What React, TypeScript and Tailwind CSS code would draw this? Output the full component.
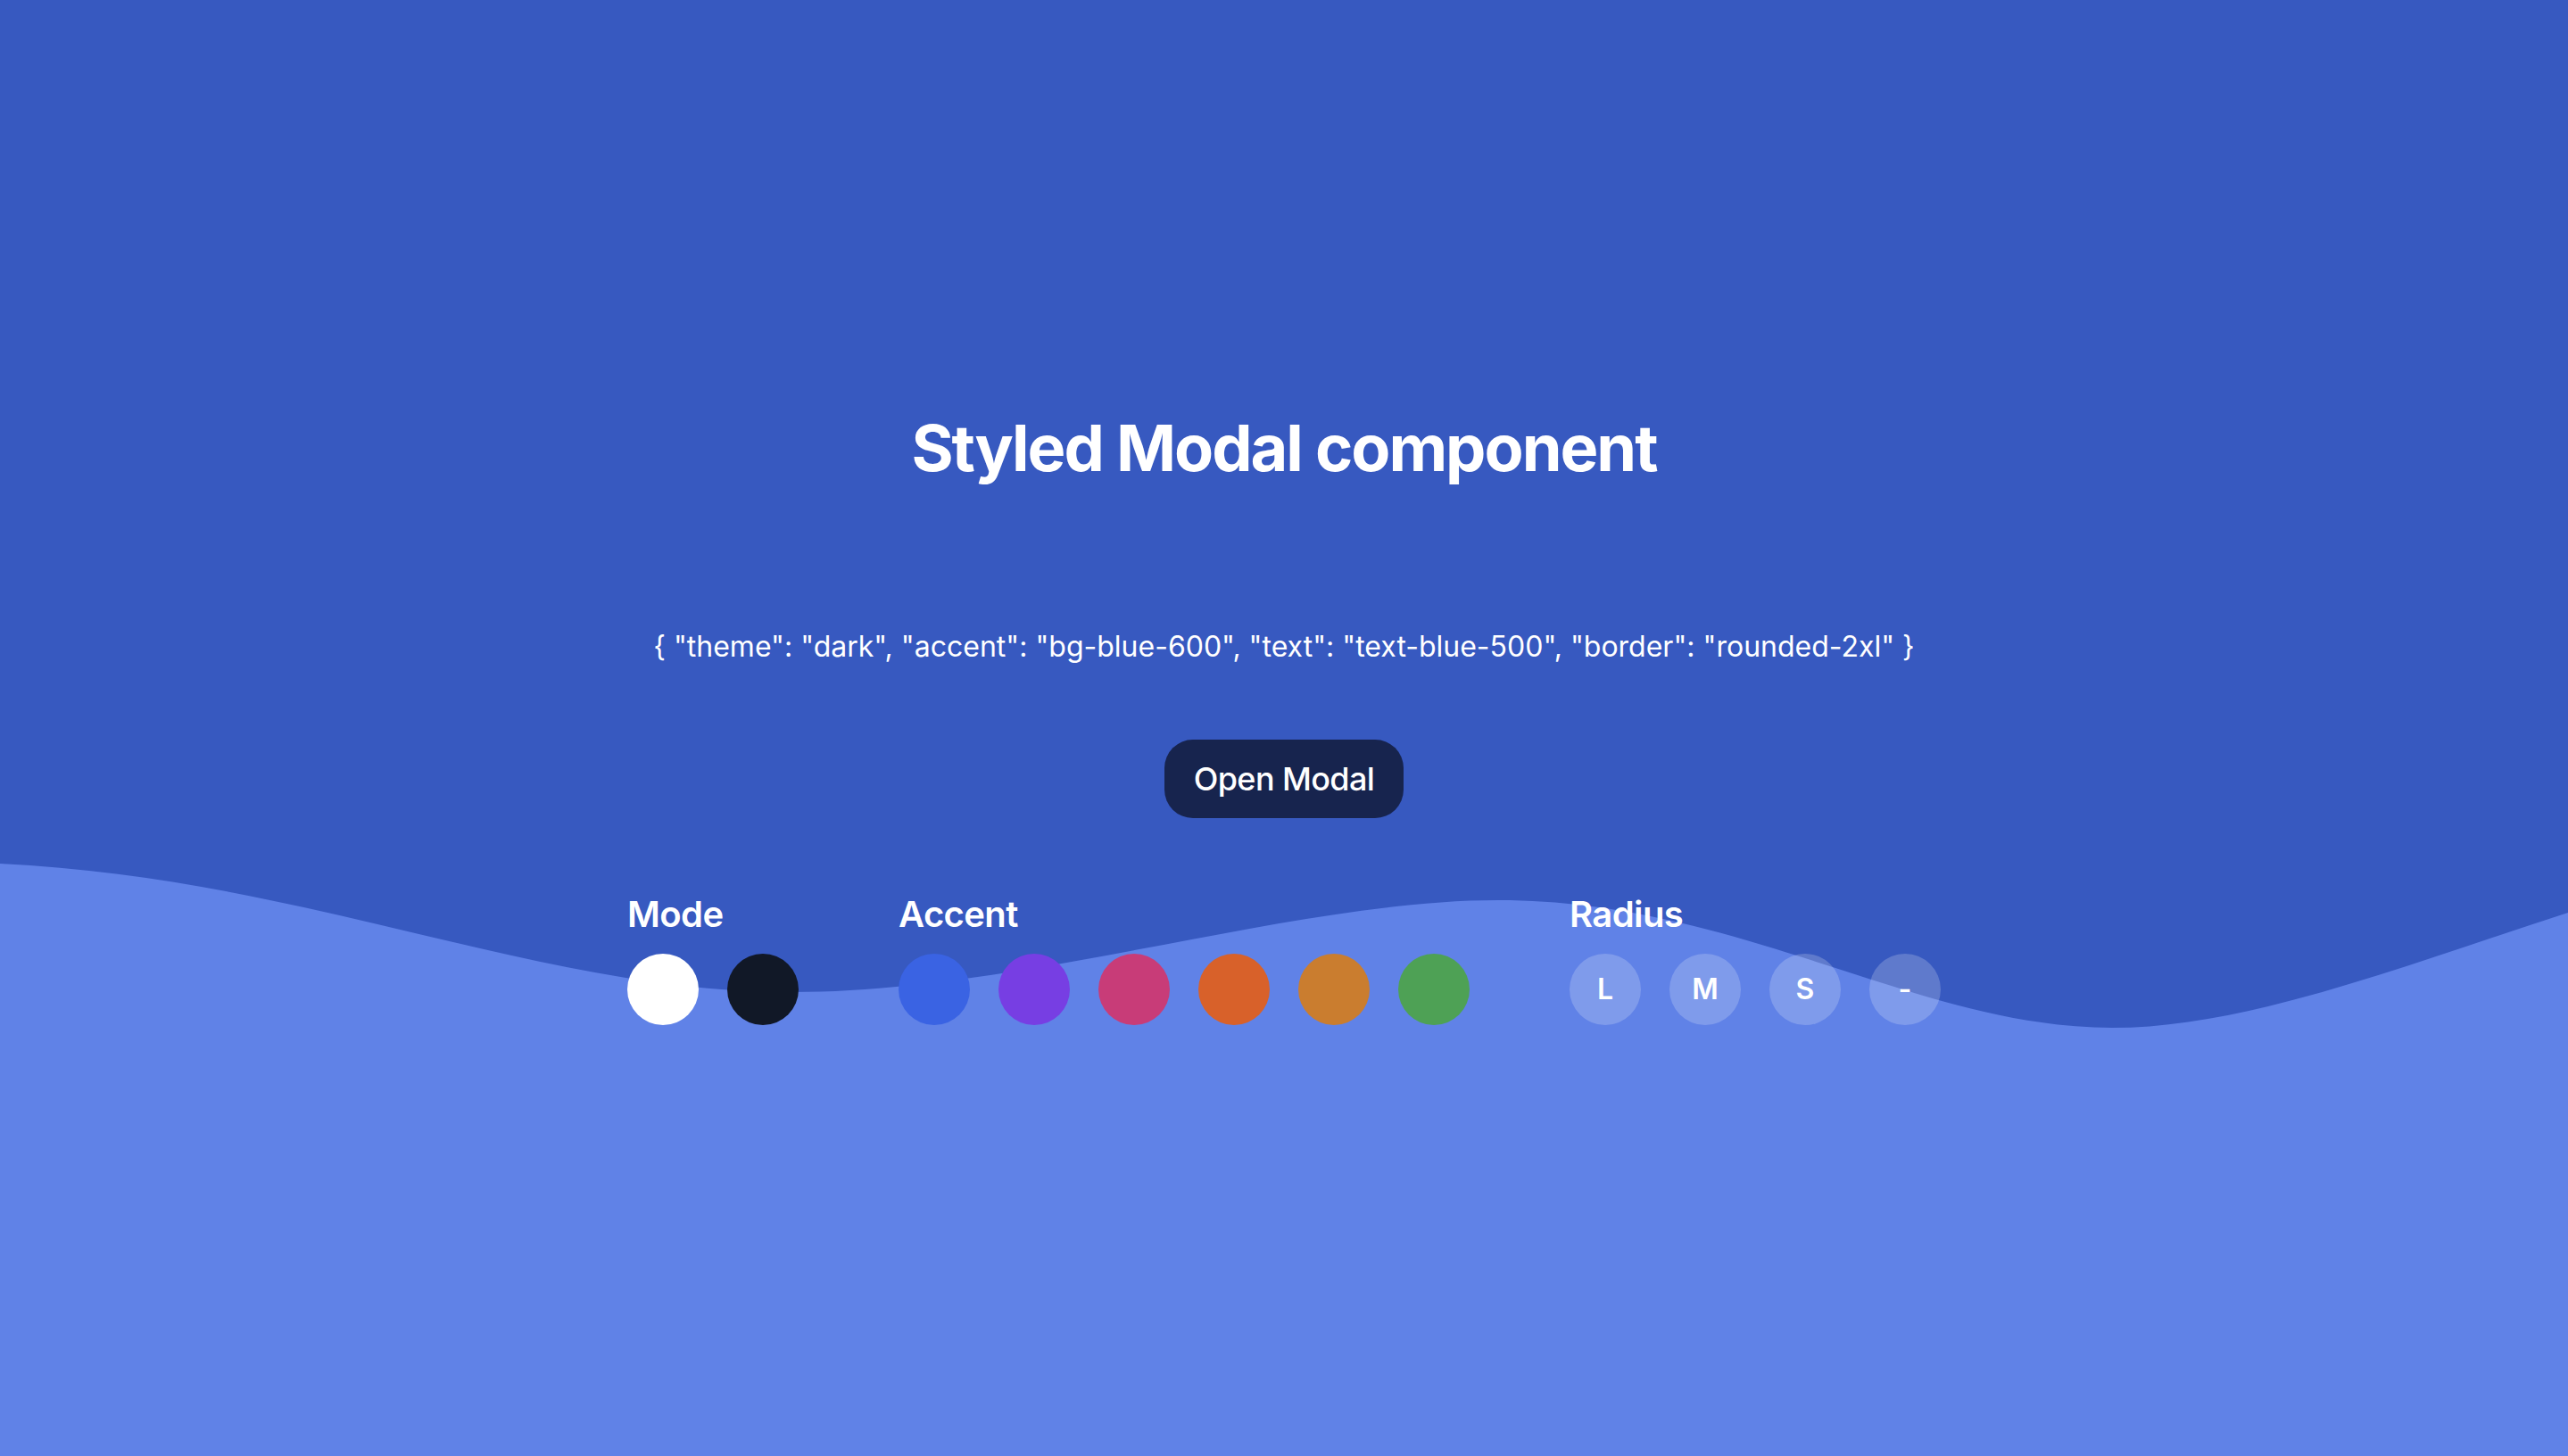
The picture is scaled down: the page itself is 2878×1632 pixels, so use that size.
import React from "react";

const accents = ["#3a63e3", "#773ee3", "#c83c78", "#d8612a", "#ca7d2f", "#4ea155"];
const radii = ["L", "M", "S", "-"];

const Swatch: React.FC<{ color: string }> = ({ color }) => (
  <button className="h-[80px] w-[80px] rounded-full" style={{ backgroundColor: color }} />
);

export default function App() {
  return (
    <div className="relative min-h-screen w-full overflow-hidden bg-[#3759c0] font-['Inter','Noto_Sans',sans-serif]">
      <svg
        className="absolute inset-0 h-full w-full"
        viewBox="0 0 2878 1632"
        preserveAspectRatio="none"
      >
        <path
          fill="#6082e7"
          d="M0,968 C350,985 600,1112 888,1112 C1150,1112 1450,1009 1679,1009 C1950,1009 2150,1152 2367,1152 C2520,1152 2700,1080 2878,1023 L2878,1632 L0,1632 Z"
        />
      </svg>

      <div className="relative flex flex-col items-center pt-[462px]">
        <h1 className="text-[72px] leading-[80px] font-bold tracking-[-2px] text-white">
          Styled Modal component
        </h1>
        <p className="mt-[159px] text-[32px] leading-[48px] text-white">
          {'{ "theme": "dark", "accent": "bg-blue-600", "text": "text-blue-500", "border": "rounded-2xl" }'}
        </p>
        <button className="mt-[80px] h-[88px] rounded-[32px] bg-[#17244e] px-[33px] text-[36px] leading-[56px] font-medium tracking-[-0.6px] text-white">
          Open Modal
        </button>

        <div className="mt-[80px] flex gap-[112px]">
          <div className="flex flex-col gap-[16px]">
            <span className="text-[40px] leading-[56px] font-semibold tracking-[-0.6px] text-white">Mode</span>
            <div className="flex gap-[32px]">
              <Swatch color="#ffffff" />
              <Swatch color="#111827" />
            </div>
          </div>
          <div className="flex flex-col gap-[16px]">
            <span className="text-[40px] leading-[56px] font-semibold tracking-[-0.6px] text-white">Accent</span>
            <div className="flex gap-[32px]">
              {accents.map((c) => (
                <Swatch key={c} color={c} />
              ))}
            </div>
          </div>
          <div className="flex flex-col gap-[16px]">
            <span className="text-[40px] leading-[56px] font-semibold tracking-[-0.6px] text-white">Radius</span>
            <div className="flex gap-[32px]">
              {radii.map((r) => (
                <button
                  key={r}
                  className="flex h-[80px] w-[80px] items-center justify-center rounded-full bg-white/20 text-[32px] font-semibold text-white"
                >
                  {r}
                </button>
              ))}
            </div>
          </div>
        </div>
      </div>
    </div>
  );
}
